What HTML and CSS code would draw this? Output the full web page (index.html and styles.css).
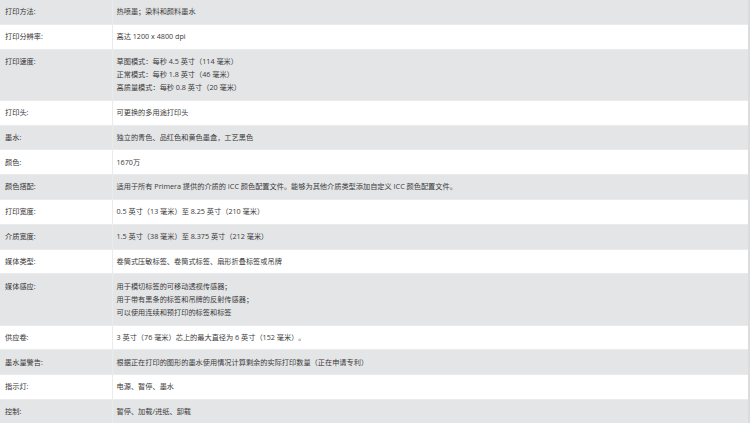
FILE: index.html
```html
<!DOCTYPE html>
<html lang="zh-CN">
<head>
<meta charset="utf-8">
<title>规格</title>
<link rel="stylesheet" href="styles.css">
</head>
<body>
<div class="page">
<table class="spec">
<colgroup><col class="c-label"><col class="c-value"></colgroup>
<tbody>
<tr><th>打印方法:</th><td>热喷墨；染料和颜料墨水</td></tr>
<tr><th>打印分辨率:</th><td>高达 1200 x 4800 dpi</td></tr>
<tr><th>打印速度:</th><td>草图模式：每秒 4.5 英寸（114 毫米）<br>正常模式：每秒 1.8 英寸（46 毫米）<br>高质量模式：每秒 0.8 英寸（20 毫米）</td></tr>
<tr><th>打印头:</th><td>可更换的多用途打印头</td></tr>
<tr><th>墨水:</th><td>独立的青色、品红色和黄色墨盒，工艺黑色</td></tr>
<tr><th>颜色:</th><td>1670万</td></tr>
<tr><th>颜色搭配:</th><td>适用于所有 Primera 提供的介质的 ICC 颜色配置文件。能够为其他介质类型添加自定义 ICC 颜色配置文件。</td></tr>
<tr><th>打印宽度:</th><td>0.5 英寸（13 毫米）至 8.25 英寸（210 毫米）</td></tr>
<tr><th>介质宽度:</th><td>1.5 英寸（38 毫米）至 8.375 英寸（212 毫米）</td></tr>
<tr><th>媒体类型:</th><td>卷筒式压敏标签、卷筒式标签、扇形折叠标签或吊牌</td></tr>
<tr><th>媒体感应:</th><td>用于模切标签的可移动透视传感器；<br>用于带有黑条的标签和吊牌的反射传感器；<br>可以使用连续和预打印的标签和标签</td></tr>
<tr><th>供应卷:</th><td>3 英寸（76 毫米）芯上的最大直径为 6 英寸（152 毫米）。</td></tr>
<tr><th>墨水量警告:</th><td>根据正在打印的图形的墨水使用情况计算剩余的实际打印数量（正在申请专利）</td></tr>
<tr><th>指示灯:</th><td>电源、暂停、墨水</td></tr>
<tr><th>控制:</th><td>暂停、加载/进纸、卸载</td></tr>
</tbody>
</table>
</div>
</body>
</html>
```
FILE: styles.css
```css
html, body {
  margin: 0;
  padding: 0;
  background: #ffffff;
}
.page {
  width: 750px;
  box-sizing: border-box;
  border-right: 2px solid #dcdcdc;
}
.spec {
  width: 100%;
  border-collapse: collapse;
  table-layout: fixed;
  font-family: "Open Sans", "Noto Sans CJK SC", sans-serif;
  font-size: 7.2px;
  line-height: 13.2px;
  color: #3a3a3a;
  text-spacing-trim: space-all;
}
.c-label { width: 112px; }
.spec th,
.spec td {
  padding: 5.3px 5px 5.3px 5px;
  text-align: left;
  vertical-align: top;
  font-weight: normal;
  border-bottom: 1px solid #ebebeb;
}
.spec th {
  border-right: 1px solid #ebebeb;
  color: #333333;
}
.spec td {
  padding-left: 4px;
}
.spec tr:nth-child(odd) th,
.spec tr:nth-child(odd) td {
  background: #e4e5e7;
}
```
